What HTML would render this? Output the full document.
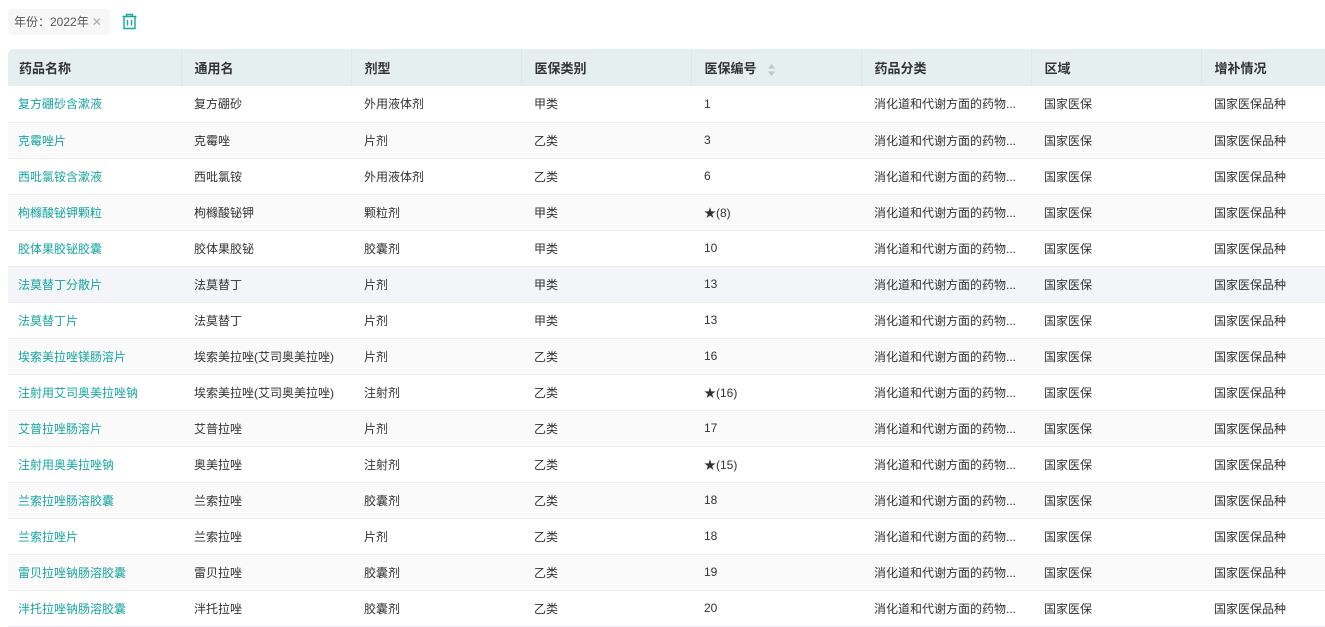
<!DOCTYPE html>
<html><head><meta charset="utf-8"><style>
*{margin:0;padding:0;box-sizing:border-box}
body{width:1325px;height:620px;overflow:hidden;background:#fff;font-family:"Liberation Sans","Noto Sans CJK SC",sans-serif;font-size:12px;color:#333}
.tag{position:absolute;left:8px;top:9px;width:102px;height:26px;background:#f7f7f7;border-radius:4px;line-height:26px;padding-left:6px;color:#555;font-size:12px}
.tag span{color:#aaa;margin-left:3px}
.trash{position:absolute;left:121px;top:13px}
table{position:absolute;left:8px;top:49px;width:1317px;border-collapse:collapse;table-layout:fixed}
th{background:#e6eff0;height:37px;text-align:left;font-weight:bold;font-size:13px;color:#333;padding-left:13px;border-left:1px solid #dbe7e8}
th:first-child{border-left:none;border-radius:6px 0 0 0;padding-left:11px}
td{height:36px;padding-left:13px;border-bottom:1px solid #ececf0;white-space:nowrap;overflow:hidden}
td:first-child{color:#17a5a0;padding-left:10px}
tr.a td{background:#fafafa}
tr.h td{background:#f4f5f9}
.sort{display:inline-block;vertical-align:middle;margin-left:10px}
</style></head><body>
<div class="tag">年份：2022年<span>✕</span></div>
<svg class="trash" width="17" height="17" viewBox="0 0 17 17" fill="none" stroke="#17a5a0" stroke-width="1.4"><path d="M5.5 3V1.5h6V3M1.5 3.5h14M3 3.5v12h11v-12M6.5 7v5.5M10.5 7v5.5M3 15.5h11"/></svg>
<table>
<colgroup><col style="width:173px"><col style="width:170px"><col style="width:170px"><col style="width:170px"><col style="width:170px"><col style="width:170px"><col style="width:170px"><col style="width:124px"></colgroup>
<tr><th>药品名称</th><th>通用名</th><th>剂型</th><th>医保类别</th><th>医保编号<svg class="sort" width="9" height="14" viewBox="0 0 9 14"><path d="M4.5 1L8 5.5H1z" fill="#c0c4cc"/><path d="M4.5 13L8 8.5H1z" fill="#c0c4cc"/></svg></th><th>药品分类</th><th>区域</th><th>增补情况</th></tr>
<tr><td>复方硼砂含漱液</td><td>复方硼砂</td><td>外用液体剂</td><td>甲类</td><td>1</td><td>消化道和代谢方面的药物...</td><td>国家医保</td><td>国家医保品种</td></tr>
<tr class="a"><td>克霉唑片</td><td>克霉唑</td><td>片剂</td><td>乙类</td><td>3</td><td>消化道和代谢方面的药物...</td><td>国家医保</td><td>国家医保品种</td></tr>
<tr><td>西吡氯铵含漱液</td><td>西吡氯铵</td><td>外用液体剂</td><td>乙类</td><td>6</td><td>消化道和代谢方面的药物...</td><td>国家医保</td><td>国家医保品种</td></tr>
<tr class="a"><td>枸橼酸铋钾颗粒</td><td>枸橼酸铋钾</td><td>颗粒剂</td><td>甲类</td><td>★(8)</td><td>消化道和代谢方面的药物...</td><td>国家医保</td><td>国家医保品种</td></tr>
<tr><td>胶体果胶铋胶囊</td><td>胶体果胶铋</td><td>胶囊剂</td><td>甲类</td><td>10</td><td>消化道和代谢方面的药物...</td><td>国家医保</td><td>国家医保品种</td></tr>
<tr class="h"><td>法莫替丁分散片</td><td>法莫替丁</td><td>片剂</td><td>甲类</td><td>13</td><td>消化道和代谢方面的药物...</td><td>国家医保</td><td>国家医保品种</td></tr>
<tr><td>法莫替丁片</td><td>法莫替丁</td><td>片剂</td><td>甲类</td><td>13</td><td>消化道和代谢方面的药物...</td><td>国家医保</td><td>国家医保品种</td></tr>
<tr class="a"><td>埃索美拉唑镁肠溶片</td><td>埃索美拉唑(艾司奥美拉唑)</td><td>片剂</td><td>乙类</td><td>16</td><td>消化道和代谢方面的药物...</td><td>国家医保</td><td>国家医保品种</td></tr>
<tr><td>注射用艾司奥美拉唑钠</td><td>埃索美拉唑(艾司奥美拉唑)</td><td>注射剂</td><td>乙类</td><td>★(16)</td><td>消化道和代谢方面的药物...</td><td>国家医保</td><td>国家医保品种</td></tr>
<tr class="a"><td>艾普拉唑肠溶片</td><td>艾普拉唑</td><td>片剂</td><td>乙类</td><td>17</td><td>消化道和代谢方面的药物...</td><td>国家医保</td><td>国家医保品种</td></tr>
<tr><td>注射用奥美拉唑钠</td><td>奥美拉唑</td><td>注射剂</td><td>乙类</td><td>★(15)</td><td>消化道和代谢方面的药物...</td><td>国家医保</td><td>国家医保品种</td></tr>
<tr class="a"><td>兰索拉唑肠溶胶囊</td><td>兰索拉唑</td><td>胶囊剂</td><td>乙类</td><td>18</td><td>消化道和代谢方面的药物...</td><td>国家医保</td><td>国家医保品种</td></tr>
<tr><td>兰索拉唑片</td><td>兰索拉唑</td><td>片剂</td><td>乙类</td><td>18</td><td>消化道和代谢方面的药物...</td><td>国家医保</td><td>国家医保品种</td></tr>
<tr class="a"><td>雷贝拉唑钠肠溶胶囊</td><td>雷贝拉唑</td><td>胶囊剂</td><td>乙类</td><td>19</td><td>消化道和代谢方面的药物...</td><td>国家医保</td><td>国家医保品种</td></tr>
<tr><td>泮托拉唑钠肠溶胶囊</td><td>泮托拉唑</td><td>胶囊剂</td><td>乙类</td><td>20</td><td>消化道和代谢方面的药物...</td><td>国家医保</td><td>国家医保品种</td></tr>
</table>
</body></html>
